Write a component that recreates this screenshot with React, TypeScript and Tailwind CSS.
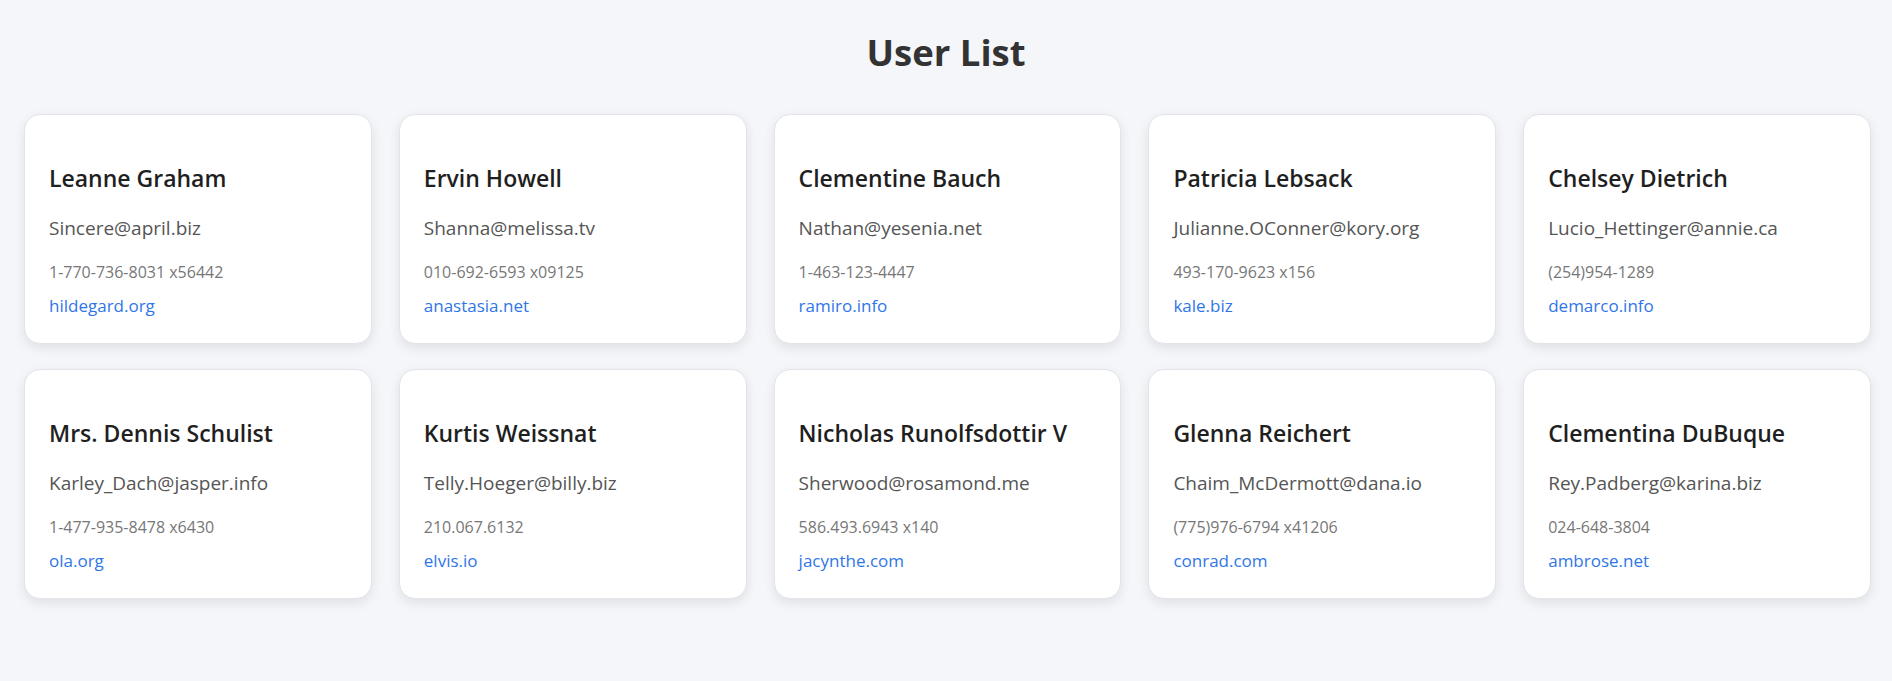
const users = [
  { name: "Leanne Graham", email: "Sincere@april.biz", phone: "1-770-736-8031 x56442", website: "hildegard.org" },
  { name: "Ervin Howell", email: "Shanna@melissa.tv", phone: "010-692-6593 x09125", website: "anastasia.net" },
  { name: "Clementine Bauch", email: "Nathan@yesenia.net", phone: "1-463-123-4447", website: "ramiro.info" },
  { name: "Patricia Lebsack", email: "Julianne.OConner@kory.org", phone: "493-170-9623 x156", website: "kale.biz" },
  { name: "Chelsey Dietrich", email: "Lucio_Hettinger@annie.ca", phone: "(254)954-1289", website: "demarco.info" },
  { name: "Mrs. Dennis Schulist", email: "Karley_Dach@jasper.info", phone: "1-477-935-8478 x6430", website: "ola.org" },
  { name: "Kurtis Weissnat", email: "Telly.Hoeger@billy.biz", phone: "210.067.6132", website: "elvis.io" },
  { name: "Nicholas Runolfsdottir V", email: "Sherwood@rosamond.me", phone: "586.493.6943 x140", website: "jacynthe.com" },
  { name: "Glenna Reichert", email: "Chaim_McDermott@dana.io", phone: "(775)976-6794 x41206", website: "conrad.com" },
  { name: "Clementina DuBuque", email: "Rey.Padberg@karina.biz", phone: "024-648-3804", website: "ambrose.net" },
];

const UserCard = ({ user }: { user: (typeof users)[number] }) => {
  return (
    <div className="flex flex-col px-6 pt-[47px] pb-[24px] rounded-2xl bg-white border border-[#e2e4e8] shadow-[0_4px_12px_rgba(0,0,0,0.09)]">
      <h3 className="text-[23px] leading-[32px] font-semibold text-[#1f1f1f]">{user.name}</h3>
      <p className="mt-[20px] text-[19px] leading-[28px] text-[#555]">{user.email}</p>
      <p className="mt-[17px] text-[16px] leading-[26px] text-[#777]">{user.phone}</p>
      <a href="#" className="mt-[8px] text-[17px] leading-[26px] text-[#2f76e9]">
        {user.website}
      </a>
    </div>
  );
};

export default function App() {
  return (
    <div className="min-h-[681px] w-full bg-[#f5f6fa] font-['Open_Sans',sans-serif]">
      <h1 className="pt-[27px] pb-[37px] text-center text-[36.5px] leading-[50px] font-bold text-[#333]">
        User List
      </h1>
      <div className="grid grid-cols-5 gap-x-[27px] gap-y-[25px] pl-6 pr-[21px]">
        {users.map((u) => (
          <UserCard key={u.name} user={u} />
        ))}
      </div>
    </div>
  );
}
